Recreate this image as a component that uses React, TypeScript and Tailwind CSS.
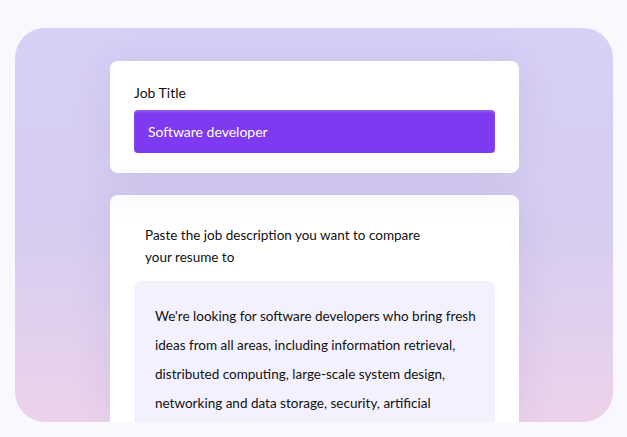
import React from 'react';

const lines = [
  "We're looking for software developers who bring fresh",
  'ideas from all areas, including information retrieval,',
  'distributed computing, large-scale system design,',
  'networking and data storage, security, artificial',
];

const App: React.FC = () => {
  return (
    <div
      className="w-[627px] h-[437px] bg-[#f9f8fe] pt-[28px] px-[15px] overflow-hidden"
      style={{ fontFamily: 'Lato, "Noto Sans", sans-serif' }}
    >
      <div className="w-[598px] h-[394px] rounded-[30px] overflow-hidden bg-gradient-to-b from-[#d8d0f6] via-[#d6cdf0] to-[#ecd3eb] pt-[33px] pl-[95px]">
        <div className="w-[409px] flex flex-col gap-[22px]">
          <div className="h-[112px] bg-white rounded-[8px] px-[24px] pt-[22px] shadow-[0_0_40px_rgba(90,70,170,0.10)]">
            <div className="text-[14px] leading-[20px] text-[#111]">Job Title</div>
            <div className="mt-[7px] h-[43px] rounded-[4px] bg-[#7d3af0] px-[14px] flex items-center text-[14px] text-white shadow-[inset_0_2px_2px_rgba(255,255,255,0.18)]">
              Software developer
            </div>
          </div>
          <div className="h-[227px] bg-gradient-to-b from-[#fafafa] to-white to-[12%] rounded-t-[8px] pt-[29px] shadow-[0_0_40px_rgba(90,70,170,0.10)]">
            <div className="pl-[35px] text-[13.5px] leading-[22px] text-[#111] whitespace-nowrap">
              Paste the job description you want to compare
              <br />
              your resume to
            </div>
            <div className="mt-[13px] mx-[24px] h-[141px] rounded-t-[8px] bg-[#f4f1fe] pl-[21px] pt-[21px] text-[13.5px] leading-[29px] text-[#111] whitespace-nowrap">
              {lines.map((l) => (
                <div key={l}>{l}</div>
              ))}
            </div>
          </div>
        </div>
      </div>
    </div>
  );
};

export default App;
